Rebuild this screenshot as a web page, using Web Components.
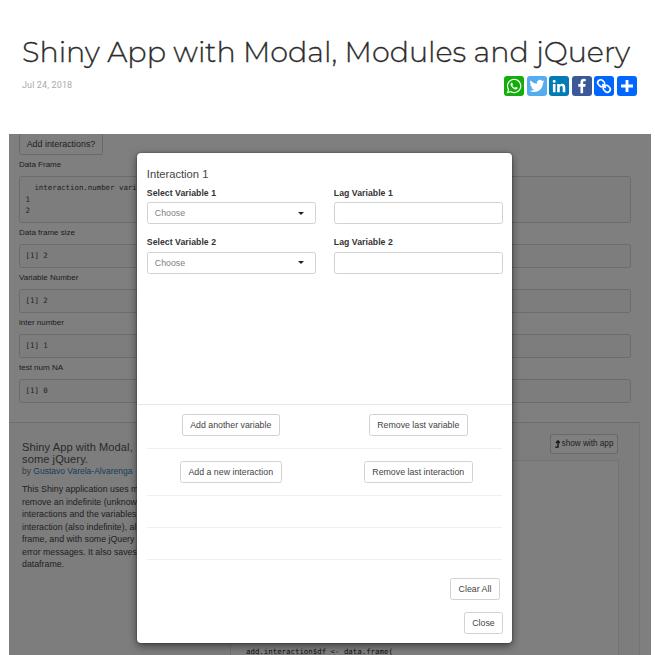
<!DOCTYPE html>
<html lang="en"><head><meta charset="utf-8"><title>Shiny App with Modal, Modules and jQuery</title>
<style>html,body{margin:0;height:100%;overflow:hidden;background:#fff}body{font-family:"Liberation Sans",Arial,sans-serif;color:#444}</style></head><body>
<blog-page></blog-page>
<script>
const define=(name,html)=>customElements.define(name,class extends HTMLElement{
  connectedCallback(){ if(this.shadowRoot)return; const t=document.createElement('template');t.innerHTML=html;
    this.attachShadow({mode:'open'}).appendChild(t.content.cloneNode(true)); }
});
define('blog-header',`<style>
:host{display:block;height:134px;padding:0 18px 0 22px;box-sizing:border-box}
h1{margin:0;padding-top:32px;font:300 28.6px/40px Montserrat,Inter,sans-serif;color:#2c2c2c;-webkit-text-stroke:.3px #2c2c2c;white-space:nowrap}
.row{display:flex;justify-content:space-between;margin-top:3px}
time{font:9px/12px Roboto,sans-serif;color:#aaa;padding-top:4px;letter-spacing:.13px}
.share{display:flex;gap:2.6px;padding-top:1px}
svg{width:20px;height:20px;display:block;border-radius:3px}
</style><h1>Shiny App with Modal, Modules and jQuery</h1>
<div class="row"><time>Jul 24, 2018</time><div class="share">
<svg viewBox="0 0 32 32" style="background:#12af0a"><path fill="#fff" fill-rule="evenodd" d="M16.21 4.41c-6.4 0-11.59 5.15-11.59 11.5 0 2.18.61 4.22 1.67 5.96L4.2 28.05l6.43-2.04a11.6 11.6 0 0 0 5.58 1.41c6.4 0 11.59-5.15 11.59-11.5S22.61 4.41 16.21 4.41zm0 21.18c-1.96 0-3.78-.58-5.3-1.58l-3.7 1.18 1.2-3.55a9.5 9.5 0 0 1-1.85-5.65c0-5.28 4.33-9.57 9.65-9.57s9.66 4.29 9.66 9.57-4.34 9.6-9.66 9.6zm5.14-7.18c-.28-.13-1.66-.81-1.92-.9s-.45-.13-.63.15-.72.92-.88 1.11-.33.22-.61.09a7.7 7.7 0 0 1-2.28-1.39 8.4 8.4 0 0 1-1.58-1.95c-.17-.28-.02-.43.12-.57.12-.12.28-.33.42-.49.13-.17.18-.28.27-.47s.04-.34-.03-.48-.63-1.5-.87-2.06c-.23-.54-.46-.46-.63-.46l-.54-.01c-.19 0-.49.07-.75.35s-.97.97-.97 2.33.99 2.68 1.13 2.86 1.91 3.05 4.73 4.16 2.81.74 3.32.69 1.64-.67 1.87-1.31.23-1.19.16-1.31-.25-.19-.53-.33z"/></svg>
<svg viewBox="0 0 32 32" style="background:#55acee"><path fill="#fff" d="M28 8.56a9.9 9.9 0 0 1-2.83.77 4.93 4.93 0 0 0 2.17-2.72 9.9 9.9 0 0 1-3.13 1.19 4.92 4.92 0 0 0-8.39 4.49A13.98 13.98 0 0 1 5.67 7.15a4.93 4.93 0 0 0 1.52 6.57 4.9 4.9 0 0 1-2.23-.61v.06a4.93 4.93 0 0 0 3.95 4.83 4.9 4.9 0 0 1-2.22.08 4.93 4.93 0 0 0 4.6 3.42A9.88 9.88 0 0 1 4 23.54a13.94 13.94 0 0 0 7.55 2.21c9.06 0 14.01-7.5 14.01-14.01l-.02-.64A10 10 0 0 0 28 8.56z"/></svg>
<svg viewBox="0 0 32 32" style="background:#007bb5"><path fill="#fff" d="M6.23 12.61h4.19v13.48H6.23zm2.1-6.7a2.43 2.43 0 1 1 0 4.86 2.43 2.43 0 0 1 0-4.86M13.05 12.61h4.02v1.84h.06c.56-1.06 1.93-2.18 3.97-2.18 4.24 0 5.02 2.8 5.02 6.43v7.4h-4.18v-6.56c0-1.57-.03-3.58-2.18-3.58-2.18 0-2.51 1.71-2.51 3.46v6.67h-4.19V12.61z"/></svg>
<svg viewBox="0 0 32 32" style="background:#3b5998"><path fill="#fff" d="M17.78 27.5V17.01h3.52l.53-4.09h-4.05v-2.61c0-1.18.33-1.99 2.03-1.99h2.17V4.66a29 29 0 0 0-3.16-.16c-3.12 0-5.26 1.91-5.26 5.41v3.01h-3.53v4.09h3.53V27.5z"/></svg>
<svg viewBox="0 0 32 32" style="background:#0166ff"><g fill="none" stroke="#fff" stroke-width="2.6" stroke-linecap="round" transform="rotate(45 16 16)"><path d="M15.5 14.5C15 12.500 13 11.300 11 11.300H8.500a4.700 4.700 0 0 0 0 9.400H11c2 0 3.600-1.100 4.300-2.700M16.500 17.500c.500 2 2.500 3.200 4.500 3.200h2.500a4.700 4.700 0 0 0 0-9.400H21c-2 0-3.600 1.100-4.300 2.700M13 16h6"/></g></svg>
<svg viewBox="0 0 32 32" style="background:#0166ff"><path d="M16 6.500v19M6.500 16h19" stroke="#fff" stroke-width="4.600"/></svg>
</div></div>`);
define('ui-button',`<style>:host{display:inline-block}button{display:flex;align-items:center;justify-content:center;gap:2px;width:100%;height:100%;box-sizing:border-box;margin:0;padding:0;border:1px solid #d2d2d2;border-radius:2.5px;background:#fff;color:#444;font:inherit;letter-spacing:inherit;white-space:nowrap}</style><button><slot></slot></button>`);
define('output-block',`<style>:host{display:block;margin-bottom:4.2px}.label{font-size:8px;line-height:12px;color:#3c3c3c}
pre{margin:5px 0 0;box-sizing:border-box;border:1px solid #d8d8d8;border-radius:2.5px;background:#fafafa;padding:5.2px 5.5px;font:7.4px/11.5px "DejaVu Sans Mono",monospace;color:#444}</style>
<div class="label"><slot name="label"></slot></div><pre><slot></slot></pre>`);
define('showcase-panel',`<style>:host{display:block;position:relative;box-sizing:border-box;width:630.5px;height:233px;border-top:1px solid #ddd;border-right:1px solid #e6e6e6;background:#fafafa}
.cols{display:grid;grid-template-columns:195px 389px;column-gap:13px;padding-left:13px}
h4{font-weight:400;font-size:11.1px;line-height:12px;margin:18px 0 0;color:#555;white-space:nowrap;letter-spacing:.08px}
small{display:block;font-size:8.5px;line-height:12px;color:#777;white-space:nowrap;margin-top:.5px}a{color:#337ab7}
p{margin:6px 0 0;font-size:8.8px;line-height:12.55px;white-space:nowrap}
.top{height:37px;box-sizing:border-box;display:flex;justify-content:flex-end;padding:11px 1px 0}
ui-button{width:68px;height:20px;font-size:8.2px;flex:none}svg{width:5px;height:8px}
.code{border:1px solid #e6e6e6;background:#fff;height:200px;box-sizing:border-box;padding:185px 0 0 15px;font:7.4px/11px "DejaVu Sans Mono",monospace;color:#222;white-space:pre}</style>
<div class="cols"><div><h4>Shiny App with Modal,<br>some jQuery.</h4><small>by <a>Gustavo Varela-Alvarenga</a></small>
<p>This Shiny application uses modules to add or<br>remove an indefinite (unknown) number of<br>interactions and the variables within each<br>interaction (also indefinite), all in a data<br>frame, and with some jQuery to handle<br>error messages. It also saves them in a<br>dataframe.</p></div>
<div><div class="top"><ui-button><svg viewBox="0 0 5 8"><path d="M.2 7.2H3V2.5M1 3L3 .8 4.8 3" fill="none" stroke="#222" stroke-width="1.3"/></svg>show with app</ui-button></div><div class="code">add.interaction$df &lt;- data.frame(</div></div></div>`);
define('shiny-app',`<style>:host{display:block;height:521px;box-sizing:border-box;background:#fff;overflow:hidden}
.main{height:289px;box-sizing:border-box;padding:0 20px 0 10px;border-left:1px solid #f2f2f2;margin-left:-1px}
.add{display:block;width:84px;height:22px;margin-top:-1.3px;margin-bottom:4.3px;font-size:8.9px}</style>
<div class="main"><ui-button class="add">Add interactions?</ui-button>
<output-block><span slot="label">Data Frame</span>  interaction.number vari
1
2</output-block>
<output-block><span slot="label">Data frame size</span>[1] 2</output-block><output-block><span slot="label">Variable Number</span>[1] 2</output-block><output-block><span slot="label">inter number</span>[1] 1</output-block><output-block><span slot="label">test num NA</span>[1] 0</output-block></div>
<showcase-panel></showcase-panel>`);
define('form-field',`<style>:host{display:block;width:169px}label{display:block;font-weight:700;font-size:8.7px;line-height:12px;color:#333;letter-spacing:.04px}
.box{display:flex;justify-content:space-between;align-items:center;height:22px;margin-top:3.2px;box-sizing:border-box;border:1px solid #d2d2d2;border-radius:2.5px;padding:0 10.500px 0 7px;color:#808080;font-size:8.8px}
.box::after{content:"";border:3.5px solid transparent;border-top-color:#222;border-bottom:0}:host([plain]) .box::after{display:none}</style>
<label><slot name="label"></slot></label><div class="box"><slot></slot></div>`);
define('interaction-modal',`<style>:host{display:block;box-sizing:border-box;width:375px;height:490px;background:#fff;border-radius:4px;box-shadow:0 3px 9px rgba(0,0,0,.5),0 0 2px rgba(0,0,0,.5)}
.body{height:252px;box-sizing:border-box;border-bottom:1px solid #e8e8e8;padding:14px 9px 0 9.800px}
h4{font-weight:400;font-size:11.2px;line-height:14px;margin:0 0 6px;letter-spacing:0}
.fields{display:grid;grid-template-columns:169px 169px;column-gap:18px;row-gap:12.3px}
.foot{padding:9px 10px 0}.row{display:grid;grid-template-columns:1fr 1fr;justify-items:center;font-size:8.8px}.row>:first-child{margin-right:10px}.row>:last-child{margin-left:10px}
ui-button{height:22px;font-size:8.8px}hr{border:0;border-top:1px solid #f0f0f0;margin:12px 0}
.end{display:flex;justify-content:flex-end}</style>
<div class="body"><h4>Interaction 1</h4><div class="fields">
<form-field><span slot="label">Select Variable 1</span>Choose</form-field><form-field plain><span slot="label">Lag Variable 1</span></form-field>
<form-field><span slot="label">Select Variable 2</span>Choose</form-field><form-field plain><span slot="label">Lag Variable 2</span></form-field></div></div>
<div class="foot"><div class="row"><ui-button style="width:98px">Add another variable</ui-button><ui-button style="width:99px">Remove last variable</ui-button></div><hr>
<div class="row"><ui-button style="width:102px">Add a new interaction</ui-button><ui-button style="width:109px">Remove last interaction</ui-button></div><hr style="margin-bottom:31px"><hr style="margin:31px 0"><hr style="margin:31px 0 18px">
<div class="end"><ui-button style="width:50px;margin-right:2px">Clear All</ui-button></div><div class="end" style="margin-top:12px"><ui-button style="width:39px;margin-right:-1px">Close</ui-button></div></div>`);
define('blog-page',`<style>:host{display:block;width:655px;height:655px;overflow:hidden}
.stage{position:relative;margin-left:9px;width:641.5px}.backdrop{position:absolute;inset:0;background:rgba(0,0,0,.5)}
interaction-modal{position:absolute;left:128px;top:19px}.clip{height:521px;overflow:hidden}</style>
<blog-header></blog-header><div class="stage"><div class="clip"><shiny-app></shiny-app><div class="backdrop"></div><interaction-modal></interaction-modal></div></div>`);
</script></body></html>
